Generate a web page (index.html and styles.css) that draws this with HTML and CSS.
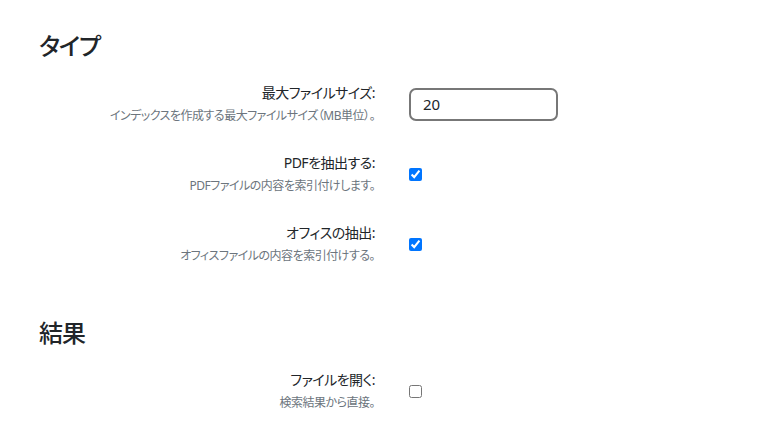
FILE: index.html
```html
<!DOCTYPE html>
<html lang="ja">

<head>
    <meta charset="UTF-8">
    <meta name="viewport" content="width=device-width, initial-scale=1.0">
    <title>設定</title>
    <link rel="stylesheet" href="styles.css">
</head>

<body>
    <main class="settings">
        <section class="group">
            <h2 class="group-title">タイプ</h2>
            <div class="fields">
                <div class="field-label">
                    <label for="max_size">最大ファイルサイズ:</label>
                    <small>インデックスを作成する最大ファイルサイズ（MB単位）。</small>
                </div>
                <div class="field-control">
                    <input type="number" name="max_size" id="max_size" value="20">
                </div>

                <div class="field-label">
                    <label for="extract_pdf">PDFを抽出する:</label>
                    <small>PDFファイルの内容を索引付けします。</small>
                </div>
                <div class="field-control">
                    <input type="checkbox" name="extract_pdf" id="extract_pdf" checked>
                </div>

                <div class="field-label">
                    <label for="extract_office">オフィスの抽出:</label>
                    <small>オフィスファイルの内容を索引付けする。</small>
                </div>
                <div class="field-control">
                    <input type="checkbox" name="extract_office" id="extract_office" checked>
                </div>
            </div>
        </section>

        <section class="group">
            <h2 class="group-title">結果</h2>
            <div class="fields">
                <div class="field-label">
                    <label for="open_file">ファイルを開く:</label>
                    <small>検索結果から直接。</small>
                </div>
                <div class="field-control">
                    <input type="checkbox" name="open_file" id="open_file">
                </div>
            </div>
        </section>
    </main>
</body>

</html>
```

FILE: styles.css
```css
body {
    margin: 0;
    background-color: #fff;
    color: #212529;
    font-family: "Noto Sans", "Noto Sans CJK JP", sans-serif;
    font-feature-settings: "palt";
}

.settings {
    padding: 30px 40px 30px 39px;
}

.group + .group {
    margin-top: 52px;
}

.group-title {
    margin: 0 0 21px;
    font-size: 24px;
    line-height: 32px;
    font-weight: 500;
    letter-spacing: -1px;
}

.fields {
    display: grid;
    grid-template-columns: 336px 1fr;
    column-gap: 34px;
    row-gap: 28px;
    align-items: center;
}

.field-label {
    display: flex;
    flex-direction: column;
    align-items: flex-end;
    text-align: right;
}

.field-label label {
    font-size: 14px;
    line-height: 20px;
    letter-spacing: -0.5px;
}

.field-label small {
    margin-top: 4px;
    font-size: 12px;
    line-height: 18px;
    letter-spacing: -0.5px;
    color: #6c757d;
}

.field-control {
    display: flex;
    align-items: center;
}

.field-control input[type="number"] {
    box-sizing: border-box;
    width: 149px;
    height: 33px;
    padding: 0 12px;
    border: 2px solid #777;
    border-radius: 7px;
    font-family: inherit;
    font-size: 15px;
    color: #212529;
    -moz-appearance: textfield;
}

.field-control input[type="number"]::-webkit-inner-spin-button,
.field-control input[type="number"]::-webkit-outer-spin-button {
    -webkit-appearance: none;
    margin: 0;
}

.field-control input[type="checkbox"] {
    width: 13px;
    height: 13px;
    margin: 0;
}
```
